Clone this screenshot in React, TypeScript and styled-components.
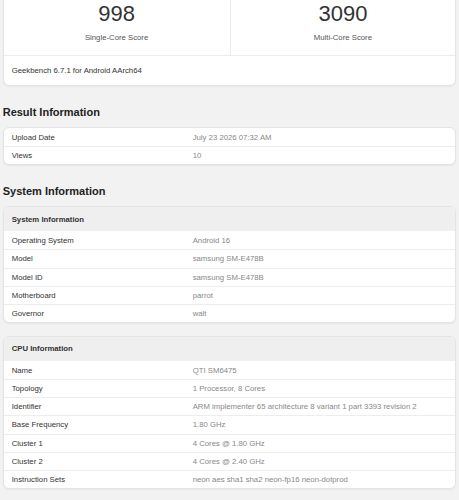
import React from "react";
import styled, { createGlobalStyle } from "styled-components";

const GlobalStyle = createGlobalStyle`
  *, *::before, *::after {
    box-sizing: border-box;
  }
  html, body {
    margin: 0;
    padding: 0;
    background: #f2f2f2;
    font-family: "Liberation Sans", Arial, Helvetica, sans-serif;
    color: #333;
  }
`;

const Page = styled.main`
  padding: 0 2.7px 20px;
  overflow: hidden;
`;

const Card = styled.section<{ $top?: number }>`
  background: #fff;
  border: 1px solid #e4e4e4;
  border-radius: 6px;
  box-shadow: 0 1px 2px rgba(0, 0, 0, 0.05);
  overflow: hidden;
  margin-top: ${(p) => (p.$top ?? 0)}px;
`;

const ScoreGrid = styled.div`
  display: grid;
  grid-template-columns: 1fr 1fr;
  border-bottom: 1px solid #ececec;
`;

const ScoreCell = styled.div`
  display: flex;
  flex-direction: column;
  align-items: center;
  padding: 12px 0 12px;
  & + & {
    border-left: 1px solid #ececec;
  }
`;

const ScoreValue = styled.div`
  font-size: 22px;
  line-height: 26px;
  color: #333;
`;

const ScoreLabel = styled.div`
  font-size: 7.75px;
  line-height: 10px;
  margin-top: 6px;
  color: #555;
`;

const Footer = styled.div`
  height: 29px;
  display: flex;
  align-items: center;
  padding: 0 8px;
  font-size: 7.75px;
  color: #333;
`;

const Heading = styled.h2`
  margin: 18px 0 7px;
  font-size: 11px;
  line-height: 16px;
  font-weight: bold;
  color: #222;
`;

const CardHeader = styled.div`
  height: 24px;
  display: flex;
  align-items: center;
  padding: 0 8px;
  background: #efefef;
  font-size: 7.75px;
  font-weight: bold;
  color: #333;
`;

const Row = styled.div`
  display: grid;
  grid-template-columns: 181px 1fr;
  align-items: center;
  height: 18.15px;
  padding: 0 8px;
  font-size: 7.75px;
  & + & {
    border-top: 1px solid #ededed;
  }
`;

const Label = styled.span`
  color: #333;
`;

const Value = styled.span`
  color: #888;
  white-space: nowrap;
`;

type Pair = [string, string];

const result: Pair[] = [
  ["Upload Date", "July 23 2026 07:32 AM"],
  ["Views", "10"],
];

const system: Pair[] = [
  ["Operating System", "Android 16"],
  ["Model", "samsung SM-E478B"],
  ["Model ID", "samsung SM-E478B"],
  ["Motherboard", "parrot"],
  ["Governor", "walt"],
];

const cpu: Pair[] = [
  ["Name", "QTI SM6475"],
  ["Topology", "1 Processor, 8 Cores"],
  ["Identifier", "ARM implementer 65 architecture 8 variant 1 part 3393 revision 2"],
  ["Base Frequency", "1.80 GHz"],
  ["Cluster 1", "4 Cores @ 1.80 GHz"],
  ["Cluster 2", "4 Cores @ 2.40 GHz"],
  ["Instruction Sets", "neon aes sha1 sha2 neon-fp16 neon-dotprod"],
];

const Rows = ({ items }: { items: Pair[] }) => (
  <>
    {items.map(([k, v]) => (
      <Row key={k}>
        <Label>{k}</Label>
        <Value>{v}</Value>
      </Row>
    ))}
  </>
);

export default function App() {
  return (
    <Page>
      <GlobalStyle />
      <Card $top={-12}>
        <ScoreGrid>
          <ScoreCell>
            <ScoreValue>998</ScoreValue>
            <ScoreLabel>Single-Core Score</ScoreLabel>
          </ScoreCell>
          <ScoreCell>
            <ScoreValue>3090</ScoreValue>
            <ScoreLabel>Multi-Core Score</ScoreLabel>
          </ScoreCell>
        </ScoreGrid>
        <Footer>Geekbench 6.7.1 for Android AArch64</Footer>
      </Card>

      <Heading>Result Information</Heading>
      <Card>
        <Rows items={result} />
      </Card>

      <Heading>System Information</Heading>
      <Card>
        <CardHeader>System Information</CardHeader>
        <Rows items={system} />
      </Card>

      <Card $top={13}>
        <CardHeader>CPU Information</CardHeader>
        <Rows items={cpu} />
      </Card>
    </Page>
  );
}
